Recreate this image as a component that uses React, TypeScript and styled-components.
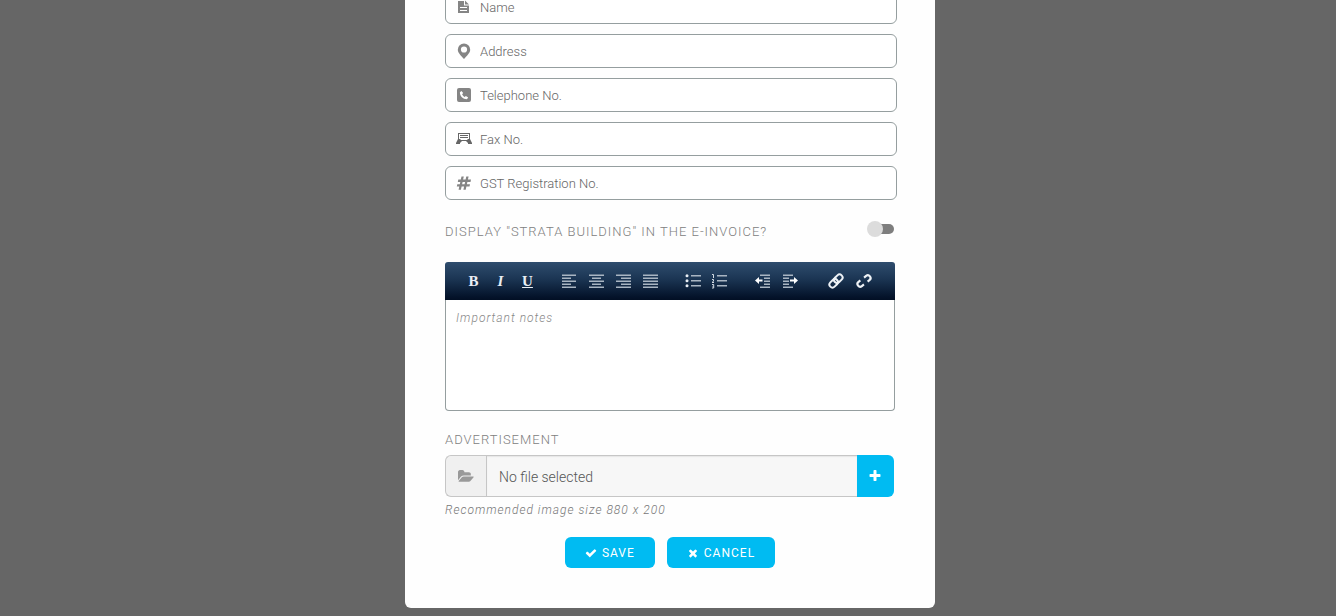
import React from "react";
import styled, { createGlobalStyle, css } from "styled-components";

const GlobalStyle = createGlobalStyle`
  *, *::before, *::after { box-sizing: border-box; }
  body {
    margin: 0;
    background: #666;
    font-family: Roboto, "Liberation Sans", sans-serif;
    font-weight: 300;
    color: #777;
  }
  input, textarea, button { font: inherit; }
`;

const Overlay = styled.div`
  display: flex;
  justify-content: center;
  min-height: 100vh;
  padding: 0 0 8px 4px;
  overflow: hidden;
`;

/* The dialog is scrolled to its end, so its first field is cut by the window's edge. */
const Dialog = styled.form`
  width: 100%;
  max-width: 530px;
  margin-top: -10px;
  padding: 0 40px 40px;
  background: #fefefe;
  border-radius: 0 0 6px 6px;
`;

const Fields = styled.div`
  display: flex;
  flex-direction: column;
  gap: 10px;
  margin-right: -2px;
`;

const Field = styled.label`
  display: flex;
  align-items: center;
  height: 34px;
  padding: 0 10px;
  gap: 8px;
  border: 1px solid #959e9f;
  border-radius: 6px;
  background: #fff;
  svg { flex: none; fill: #858585; }
`;

const FieldInput = styled.input`
  flex: 1;
  min-width: 0;
  padding: 2px 0 0;
  border: 0;
  outline: 0;
  background: none;
  font-size: 13px;
  line-height: 20px;
  color: #555;
  &::placeholder { color: #666; opacity: 1; }
`;

const SwitchRow = styled.label`
  display: flex;
  justify-content: space-between;
  align-items: flex-start;
  margin-top: 21px;
`;

const Caption = styled.span`
  display: block;
  padding-top: 1px;
  font-size: 13px;
  line-height: 20px;
  letter-spacing: 1px;
  text-transform: uppercase;
  color: #808080;
`;

const Switch = styled.input`
  appearance: none;
  position: relative;
  width: 27px;
  height: 16px;
  margin: 0 1px 0 0;
  &::before {
    content: "";
    position: absolute;
    inset: 3px 0 3px 3px;
    border-radius: 5px;
    background: #7e7e7e;
  }
  &::after {
    content: "";
    position: absolute;
    left: 0;
    top: 0;
    width: 16px;
    height: 16px;
    border-radius: 50%;
    background: #dcdcdc;
  }
  &:checked::after { left: 11px; background: #00bbf2; }
`;

const Editor = styled.div`
  margin-top: 20px;
`;

const Toolbar = styled.div`
  display: flex;
  align-items: center;
  height: 38px;
  padding-left: 15px;
  border-radius: 3px 3px 0 0;
  background: linear-gradient(#2f4d6e, #1b3553 45%, #04132a 92%, #020f24);
`;

const ToolGroup = styled.div<{ $wide?: boolean }>`
  display: flex;
  margin-right: ${(p) => (p.$wide ? 18 : 15)}px;
  button { width: ${(p) => (p.$wide ? 28 : 27)}px; }
`;

const Tool = styled.button<{ $mark?: "b" | "i" | "u" }>`
  display: flex;
  align-items: center;
  justify-content: center;
  height: 24px;
  padding: 0;
  border: 0;
  background: none;
  color: #e9eef4;
  font-family: "Liberation Serif", serif;
  font-weight: 700;
  font-size: 15px;
  line-height: 20px;
  ${(p) => p.$mark === "i" && css`font-style: italic;`}
  ${(p) => p.$mark === "u" && css`text-decoration: underline;`}
`;

const Notes = styled.textarea`
  display: block;
  width: 100%;
  height: 111px;
  padding: 8px 10px;
  border: 1px solid #959e9f;
  border-top: 0;
  border-radius: 0 0 4px 4px;
  outline: 0;
  resize: none;
  background: #fff;
  font-size: 12px;
  line-height: 20px;
  letter-spacing: 1px;
  color: #555;
  &::placeholder { color: #888; font-style: italic; opacity: 1; }
`;

const FileSection = styled.section`
  margin-top: 18px;
`;

const FileGroup = styled.div`
  display: flex;
  height: 42px;
  margin: 5px 1px 0 0;
`;

const FileAddon = styled.span`
  display: flex;
  align-items: center;
  justify-content: center;
  width: 41px;
  border: 1px solid #c6c6c6;
  border-right: 0;
  border-radius: 6px 0 0 6px;
  background: #f0f0f0;
  fill: #999;
`;

const FileName = styled.input`
  flex: 1;
  min-width: 0;
  padding: 2px 12px 0;
  border: 1px solid #c6c6c6;
  border-right: 0;
  border-radius: 0;
  outline: 0;
  background: #f7f7f7;
  box-shadow: inset 0 1px 1px #e6e6e6;
  font-size: 14px;
  color: #555;
`;

const FileButton = styled.button`
  display: flex;
  align-items: center;
  justify-content: center;
  width: 37px;
  padding: 0 2px 0 0;
  border: 0;
  border-radius: 0 6px 6px 0;
  background: #00bbf2;
  fill: #fff;
`;

const Hint = styled.p`
  margin: 3px 0 0;
  font-size: 12px;
  line-height: 20px;
  letter-spacing: 1px;
  font-style: italic;
  color: #777;
`;

const Actions = styled.div`
  display: flex;
  justify-content: center;
  gap: 12px;
  margin-top: 17px;
`;

const Action = styled.button`
  display: flex;
  align-items: center;
  gap: 5px;
  height: 31px;
  padding: 0 20px;
  border: 0;
  border-radius: 6px;
  background: #00bbf2;
  color: #fff;
  fill: #fff;
  font-size: 12px;
  font-weight: 400;
  line-height: 20px;
  letter-spacing: 1px;
`;

const FIELD_ICONS: Record<string, React.ReactNode> = {
  Name: (
    <path fillRule="evenodd" d="M2 2h6v4.500h5V14H2zM9 1.500l4 4H9zM4 8v1.100h7V8zM4 11v1.100h7V11z" />
  ),
  Address: (
    <path
      fillRule="evenodd"
      d="M8 .5a6.200 6.200 0 0 0-6.200 6.200C1.800 10 5.500 13 8 16c2.500-3 6.200-6 6.200-9.300A6.200 6.200 0 0 0 8 .5zM8 3.400a3.100 3.100 0 1 1 0 6.200 3.100 3.100 0 0 1 0-6.200z"
    />
  ),
  "Telephone No.": (
    <path
      fillRule="evenodd"
      d="M3 1h10a2 2 0 0 1 2 2v10a2 2 0 0 1-2 2H3a2 2 0 0 1-2-2V3a2 2 0 0 1 2-2zM5.400 4 3.900 5.200c0 4 3 7 7 7l1.300-1.600-2.300-1.700-1.300 1C7.500 9.400 6.600 8.500 6.100 7.300l1.100-1.200z"
    />
  ),
  "Fax No.": (
    <path
      fillRule="evenodd"
      fill="#666"
      d="M2 2h12v6l2 4v1h-4v-1l-2-2H6l-2 2v1H0v-1l2-4zM3 3v5h1l1 1h6l1-1h1V3zM4 4h8v1H4zM4 6h8v1H4z"
    />
  ),
  "GST Registration No.": (
    <path
      fillRule="evenodd"
      d="M5.500 1.500h2.300L7.100 4.600h2.500l.7-3.100h2.300l-.7 3.100H15L14.500 7h-3.100l-.5 2.200H14l-.5 2.400h-3.100l-.7 3.100H7.400l.7-3.100H5.600l-.7 3.100H2.600l.7-3.100H.8l.5-2.400h2.500L4.300 7H1.800l.5-2.400h2.500zM6.600 7l-.5 2.200h2.500L9.100 7z"
    />
  ),
};

type Bar = [x: number, y: number, w: number];

const Bars = ({ bars, children }: { bars: Bar[]; children?: React.ReactNode }) => (
  <svg width="16" height="16" viewBox="0 0 16 16" aria-hidden="true">
    {bars.map(([x, y, w]) => (
      <rect key={y} x={x} y={y} width={w} height="1.500" fill="#a9b5c2" />
    ))}
    {children}
  </svg>
);

const ALIGNMENTS: { label: string; bars: Bar[] }[] = [
  { label: "Align left", bars: [[0, 1.5, 14], [0, 4.5, 9], [0, 7.5, 14], [0, 10.5, 9], [0, 13.5, 14]] },
  { label: "Align centre", bars: [[0, 1.5, 15], [3, 4.5, 9], [0, 7.5, 15], [3, 10.5, 9], [0, 13.5, 15]] },
  { label: "Align right", bars: [[0, 1.5, 15], [5, 4.5, 10], [0, 7.5, 15], [5, 10.5, 10], [0, 13.5, 15]] },
  { label: "Justify", bars: [[0, 1.5, 15], [0, 4.5, 15], [0, 7.5, 15], [0, 10.5, 15], [0, 13.5, 15]] },
];

const Glyph = ({ d, size, width = 1792 }: { d: string; size: number; width?: number }) => (
  <svg width={Math.round((size * width) / 1792)} height={size} viewBox={`0 0 ${width} 1792`} aria-hidden="true">
    <path d={d} />
  </svg>
);

const TIMES =
  "M1490 1322q0 40-28 68l-136 136q-28 28-68 28t-68-28l-294-294-294 294q-28 28-68 28t-68-28l-136-136q-28-28-28-68t28-68l294-294-294-294q-28-28-28-68t28-68l136-136q28-28 68-28t68 28l294 294 294-294q28-28 68-28t68 28l136 136q28 28 28 68t-28 68l-294 294 294 294q28 28 28 68z";
const CHECK =
  "M1671 566q0 40-28 68l-724 724-136 136q-28 28-68 28t-68-28l-136-136-362-362q-28-28-28-68t28-68l136-136q28-28 68-28t68 28l294 295 656-657q28-28 68-28t68 28l136 136q28 28 28 68z";
const PLUS =
  "M1600 736v192q0 40-28 68t-68 28h-416v416q0 40-28 68t-68 28h-192q-40 0-68-28t-28-68v-416h-416q-40 0-68-28t-28-68v-192q0-40 28-68t68-28h416v-416q0-40 28-68t68-28h192q40 0 68 28t28 68v416h416q40 0 68 28t28 68z";
const FOLDER =
  "M1879 952q0 31-31 66l-336 396q-43 51-120.5 86.500t-143.500 35.500h-1088q-34 0-60.500-13t-26.500-43q0-31 31-66l336-396q43-51 120.500-86.500t143.500-35.500h1088q34 0 60.500 13t26.500 43zm-343-344v160h-832q-94 0-197 47.500t-164 119.500l-337 396-5 6q0-4-.5-12.500t-.5-12.500v-960q0-92 66-158t158-66h320q92 0 158 66t66 158v32h544q92 0 158 66t66 158z";

export default function App() {
  return (
    <>
      <GlobalStyle />
      <Overlay>
        <Dialog onSubmit={(e) => e.preventDefault()}>
          <Fields>
            {Object.entries(FIELD_ICONS).map(([name, icon]) => (
              <Field key={name}>
                <svg width="16" height="16" viewBox="0 0 16 16" aria-hidden="true">{icon}</svg>
                <FieldInput type="text" placeholder={name} aria-label={name} />
              </Field>
            ))}
          </Fields>

          <SwitchRow>
            <Caption>Display "Strata Building" in the e-invoice?</Caption>
            <Switch type="checkbox" role="switch" />
          </SwitchRow>

          <Editor>
            <Toolbar role="toolbar" aria-label="Formatting">
              <ToolGroup>
                <Tool type="button" $mark="b" aria-label="Bold">B</Tool>
                <Tool type="button" $mark="i" aria-label="Italic">I</Tool>
                <Tool type="button" $mark="u" aria-label="Underline">U</Tool>
              </ToolGroup>
              <ToolGroup>
                {ALIGNMENTS.map(({ label, bars }) => (
                  <Tool key={label} type="button" aria-label={label}><Bars bars={bars} /></Tool>
                ))}
              </ToolGroup>
              <ToolGroup>
                <Tool type="button" aria-label="Bulleted list">
                  <Bars bars={[[6, 2, 10], [6, 7, 10], [6, 12, 10]]}>
                    <g fill="#e9eef4">
                      <circle cx="2" cy="2.800" r="1.500" />
                      <circle cx="2" cy="7.800" r="1.500" />
                      <circle cx="2" cy="12.800" r="1.500" />
                    </g>
                  </Bars>
                </Tool>
                <Tool type="button" aria-label="Numbered list">
                  <Bars bars={[[5, 2, 10], [5, 7, 10], [5, 12, 10]]}>
                    <path d="M0 1.500h1.500V5M0 6.500h1.500v1.500L0 9.500h2M0 11.500h1.700v3.500H0M.5 13.300h1" fill="none" stroke="#d3dbe3" />
                  </Bars>
                </Tool>
              </ToolGroup>
              <ToolGroup $wide>
                <Tool type="button" aria-label="Decrease indent">
                  <Bars bars={[[6, 1.5, 10], [10, 4.5, 6], [10, 7.5, 6], [10, 10.5, 6], [6, 13.5, 10]]}>
                    <path d="M1 7.500 5 4v2.500h3.500v2H5V11z" fill="#fff" />
                  </Bars>
                </Tool>
                <Tool type="button" aria-label="Increase indent">
                  <Bars bars={[[1, 1.5, 10], [1, 4.5, 6], [1, 7.5, 6], [1, 10.5, 6], [1, 13.5, 10]]}>
                    <path d="M16 7.500 12 4v2.500H8v2h4V11z" fill="#fff" />
                  </Bars>
                </Tool>
              </ToolGroup>
              <ToolGroup $wide>
                <Tool type="button" aria-label="Insert link">
                  <svg width="16" height="16" viewBox="0 0 16 16" fill="none" stroke="#eef2f6" strokeWidth="2" aria-hidden="true">
                    <g transform="rotate(-45 8 8)">
                      <rect x="0" y="5" width="9.500" height="6" rx="3" />
                      <rect x="6.500" y="5" width="9.500" height="6" rx="3" />
                    </g>
                  </svg>
                </Tool>
                <Tool type="button" aria-label="Remove link">
                  <svg width="16" height="16" viewBox="0 0 16 16" fill="none" stroke="#eef2f6" strokeWidth="2.200" aria-hidden="true">
                    <g transform="rotate(-38 8 8)">
                      <path d="M5.500 5.300H3.200a2.700 2.700 0 0 0 0 5.400h2.600M10.200 5.300h2.600a2.700 2.700 0 0 1 0 5.400h-2.300" />
                    </g>
                  </svg>
                </Tool>
              </ToolGroup>
            </Toolbar>
            <Notes placeholder="Important notes" aria-label="Important notes" />
          </Editor>

          <FileSection>
            <Caption as="label" htmlFor="advertisement">Advertisement</Caption>
            <FileGroup>
              <FileAddon><Glyph d={FOLDER} size={15} width={1920} /></FileAddon>
              <FileName id="advertisement" type="text" readOnly value="No file selected" />
              <FileButton type="button" aria-label="Choose file"><Glyph d={PLUS} size={14} /></FileButton>
            </FileGroup>
            <Hint>Recommended image size 880 x 200</Hint>
          </FileSection>

          <Actions>
            <Action type="submit"><Glyph d={CHECK} size={12} />SAVE</Action>
            <Action type="button"><Glyph d={TIMES} size={12} />CANCEL</Action>
          </Actions>
        </Dialog>
      </Overlay>
    </>
  );
}
